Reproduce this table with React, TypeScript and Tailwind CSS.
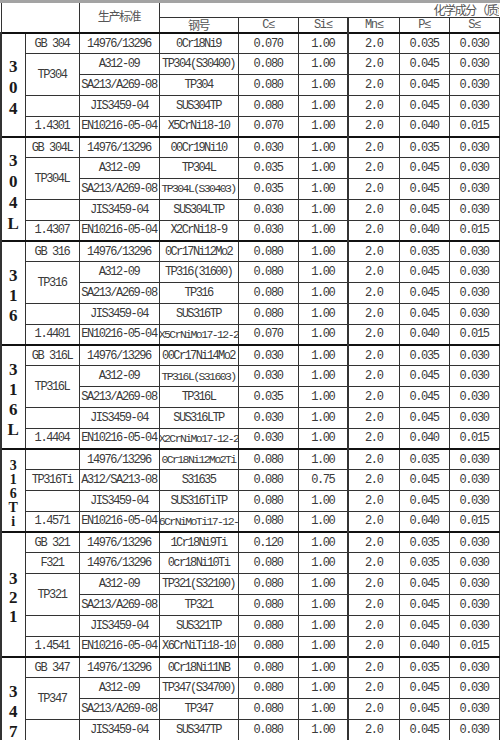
import React from 'react';

type Row = { g?: string; span?: number; skip?: boolean; std: string; steel: string; v: string[] };
type Group = { label: string[]; lead: string; rows: Row[] };

const groups: Group[] = [
  {
    label: ['3', '0', '4'],
    lead: 'leading-[21px] text-[17px]',
    rows: [
      { g: 'GB 304', std: '14976/13296', steel: '0Cr18Ni9', v: ['0.070', '1.00', '2.0', '0.035', '0.030'] },
      { g: 'TP304', span: 2, std: 'A312-09', steel: 'TP304(S30400)', v: ['0.080', '1.00', '2.0', '0.045', '0.030'] },
      { skip: true, std: 'SA213/A269-08', steel: 'TP304', v: ['0.080', '1.00', '2.0', '0.045', '0.030'] },
      { g: '', std: 'JIS3459-04', steel: 'SUS304TP', v: ['0.080', '1.00', '2.0', '0.045', '0.030'] },
      { g: '1.4301', std: 'EN10216-05-04', steel: 'X5CrNi18-10', v: ['0.070', '1.00', '2.0', '0.040', '0.015'] },
    ],
  },
  {
    label: ['3', '0', '4', 'L'],
    lead: 'leading-[21px] text-[17px]',
    rows: [
      { g: 'GB 304L', std: '14976/13296', steel: '00Cr19Ni10', v: ['0.030', '1.00', '2.0', '0.035', '0.030'] },
      { g: 'TP304L', span: 2, std: 'A312-09', steel: 'TP304L', v: ['0.035', '1.00', '2.0', '0.045', '0.030'] },
      { skip: true, std: 'SA213/A269-08', steel: 'TP304L(S30403)', v: ['0.035', '1.00', '2.0', '0.045', '0.030'] },
      { g: '', std: 'JIS3459-04', steel: 'SUS304LTP', v: ['0.030', '1.00', '2.0', '0.045', '0.030'] },
      { g: '1.4307', std: 'EN10216-05-04', steel: 'X2CrNi18-9', v: ['0.030', '1.00', '2.0', '0.040', '0.015'] },
    ],
  },
  {
    label: ['3', '1', '6'],
    lead: 'leading-[20px] text-[17px]',
    rows: [
      { g: 'GB 316', std: '14976/13296', steel: '0Cr17Ni12Mo2', v: ['0.080', '1.00', '2.0', '0.035', '0.030'] },
      { g: 'TP316', span: 2, std: 'A312-09', steel: 'TP316(31600)', v: ['0.080', '1.00', '2.0', '0.045', '0.030'] },
      { skip: true, std: 'SA213/A269-08', steel: 'TP316', v: ['0.080', '1.00', '2.0', '0.045', '0.030'] },
      { g: '', std: 'JIS3459-04', steel: 'SUS316TP', v: ['0.080', '1.00', '2.0', '0.045', '0.030'] },
      { g: '1.4401', std: 'EN10216-05-04', steel: 'X5CrNiMo17-12-2', v: ['0.070', '1.00', '2.0', '0.040', '0.015'] },
    ],
  },
  {
    label: ['3', '1', '6', 'L'],
    lead: 'leading-[20px] text-[17px]',
    rows: [
      { g: 'GB 316L', std: '14976/13296', steel: '00Cr17Ni14Mo2', v: ['0.030', '1.00', '2.0', '0.035', '0.030'] },
      { g: 'TP316L', span: 2, std: 'A312-09', steel: 'TP316L(S31603)', v: ['0.030', '1.00', '2.0', '0.045', '0.030'] },
      { skip: true, std: 'SA213/A269-08', steel: 'TP316L', v: ['0.035', '1.00', '2.0', '0.045', '0.030'] },
      { g: '', std: 'JIS3459-04', steel: 'SUS316LTP', v: ['0.030', '1.00', '2.0', '0.045', '0.030'] },
      { g: '1.4404', std: 'EN10216-05-04', steel: 'X2CrNiMo17-12-2', v: ['0.030', '1.00', '2.0', '0.040', '0.015'] },
    ],
  },
  {
    label: ['3', '1', '6', 'T', 'i'],
    lead: 'leading-[14px] text-[14px]',
    rows: [
      { g: '', std: '14976/13296', steel: '0Cr18Ni12Mo2Ti', v: ['0.080', '1.00', '2.0', '0.035', '0.030'] },
      { g: 'TP316Ti', std: 'A312/SA213-08', steel: 'S31635', v: ['0.080', '0.75', '2.0', '0.045', '0.030'] },
      { g: '', std: 'JIS3459-04', steel: 'SUS316TiTP', v: ['0.080', '1.00', '2.0', '0.045', '0.030'] },
      { g: '1.4571', std: 'EN10216-05-04', steel: 'X6CrNiMoTi17-12-2', v: ['0.080', '1.00', '2.0', '0.040', '0.015'] },
    ],
  },
  {
    label: ['3', '2', '1'],
    lead: 'leading-[19px] text-[17px]',
    rows: [
      { g: 'GB 321', std: '14976/13296', steel: '1Cr18Ni9Ti', v: ['0.120', '1.00', '2.0', '0.035', '0.030'] },
      { g: 'F321', std: '14976/13296', steel: '0cr18Ni10Ti', v: ['0.080', '1.00', '2.0', '0.035', '0.030'] },
      { g: 'TP321', span: 2, std: 'A312-09', steel: 'TP321(S32100)', v: ['0.080', '1.00', '2.0', '0.045', '0.030'] },
      { skip: true, std: 'SA213/A269-08', steel: 'TP321', v: ['0.080', '1.00', '2.0', '0.045', '0.030'] },
      { g: '', std: 'JIS3459-04', steel: 'SUS321TP', v: ['0.080', '1.00', '2.0', '0.045', '0.030'] },
      { g: '1.4541', std: 'EN10216-05-04', steel: 'X6CrNiTi18-10', v: ['0.080', '1.00', '2.0', '0.040', '0.015'] },
    ],
  },
  {
    label: ['3', '4', '7'],
    lead: 'leading-[20px] text-[17px]',
    rows: [
      { g: 'GB 347', std: '14976/13296', steel: '0Cr18Ni11NB', v: ['0.080', '1.00', '2.0', '0.035', '0.030'] },
      { g: 'TP347', span: 2, std: 'A312-09', steel: 'TP347(S34700)', v: ['0.080', '1.00', '2.0', '0.045', '0.030'] },
      { skip: true, std: 'SA213/A269-08', steel: 'TP347', v: ['0.080', '1.00', '2.0', '0.045', '0.030'] },
      { g: '', std: 'JIS3459-04', steel: 'SUS347TP', v: ['0.080', '1.00', '2.0', '0.045', '0.030'] },
      { g: '1.4550', std: 'EN10216-05-04', steel: 'X6CrNiNb18-10', v: ['0.080', '1.00', '2.0', '0.040', '0.015'] },
    ],
  },
];

const mono = "font-['Liberation_Mono','Noto_Sans_CJK_SC',monospace] text-[12px] tracking-[-1.4px]";
const cjk = "font-['Noto_Sans_CJK_SC',sans-serif] text-[12px] text-[#555]";
const cell = 'border border-[#333] p-0';

function Txt({ children }: { children: React.ReactNode }) {
  return (
    <div className="flex justify-center items-center overflow-hidden whitespace-nowrap h-full">
      <span className="shrink-0">{children}</span>
    </div>
  );
}

export default function App() {
  return (
    <div className="w-[500px] h-[740px] overflow-hidden bg-white">
      <div className="h-[3px] bg-[#a3a3a3]" />
      <table className={`table-fixed border-collapse w-[498px] text-[#3a3a3a] ${mono}`}>
        <colgroup>
          <col className="w-[24px]" />
          <col className="w-[54px]" />
          <col className="w-[80px]" />
          <col className="w-[79px]" />
          <col className="w-[60px]" />
          <col className="w-[50px]" />
          <col className="w-[51px]" />
          <col className="w-[50px]" />
          <col className="w-[50px]" />
        </colgroup>
        <thead>
          <tr className="h-[14px]">
            <th colSpan={2} rowSpan={2} className={`${cell} border-t-0`} />
            <th rowSpan={2} className={`${cell} border-t-0 font-normal`}>
              <div className={`${cjk} leading-[14px] pb-[3px]`}>生产标准</div>
            </th>
            <th colSpan={6} className={`${cell} border-t-0 border-r-0 font-normal`}>
              <div className="flex justify-start overflow-hidden whitespace-nowrap h-[14px] pl-[274px]">
                <span className={`${cjk} text-[12.5px] text-[#3a3a3a] leading-[14px] shrink-0`}>
                  化学成分（质量分数）%
                </span>
              </div>
            </th>
          </tr>
          <tr className="h-[15px]">
            <th className={`${cell} font-normal`}>
              <div className={`${cjk} leading-[14px]`}>钢号</div>
            </th>
            {['C≤', 'Si≤', 'Mn≤', 'P≤', 'S≤'].map((h, i) => (
              <th key={h} className={`${cell} font-normal ${i === 2 ? 'border-l-2' : ''}`}>
                <div className="leading-[14px] text-[#555]">{h}</div>
              </th>
            ))}
          </tr>
        </thead>
        <tbody>
          {groups.map((grp, gi) =>
            grp.rows.map((r, ri) => (
              <tr key={`${gi}-${ri}`} className={`h-[20.8px] ${ri === 0 ? 'border-t-2 border-[#111]' : ''}`}>
                {ri === 0 && (
                  <td rowSpan={grp.rows.length} className={`${cell} border-l-2 border-t-2 border-t-[#111] align-middle`}>
                    <div
                      className={`flex flex-col items-center pt-[6px] font-['Liberation_Serif',serif] font-bold tracking-normal text-[#1a1a1a] ${grp.lead}`}
                    >
                      {grp.label.map((ch, k) => (
                        <span key={k}>{ch}</span>
                      ))}
                    </div>
                  </td>
                )}
                {!r.skip && (
                  <td rowSpan={r.span ?? 1} className={`${cell} h-[20.8px]`}>
                    <Txt>{r.g}</Txt>
                  </td>
                )}
                <td className={cell}>
                  <Txt>{r.std}</Txt>
                </td>
                <td
                  className={`${cell} ${
                    r.steel.length >= 14 ? 'text-[11.5px] tracking-[-1.6px]' : 'tracking-[-1.6px]'
                  }`}
                >
                  <Txt>{r.steel}</Txt>
                </td>
                {r.v.map((val, k) => (
                  <td key={k} className={`${cell} ${k === 2 ? 'border-l-2' : ''}`}>
                    <Txt>{val}</Txt>
                  </td>
                ))}
              </tr>
            ))
          )}
        </tbody>
      </table>
    </div>
  );
}
